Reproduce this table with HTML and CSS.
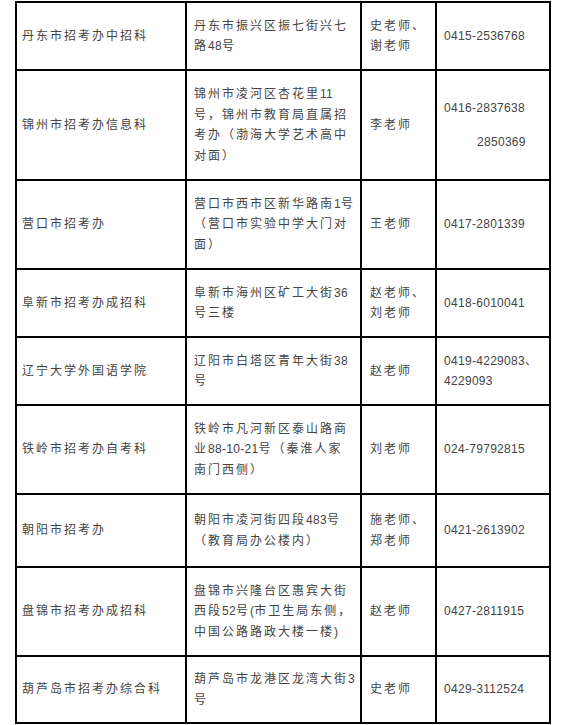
FILE: index.html
```html
<!DOCTYPE html>
<html lang="zh-CN">
<head>
<meta charset="utf-8">
<title>招考办联系方式</title>
<link rel="stylesheet" href="styles.css">
</head>
<body>
<div class="sheet">
  <div class="cell c1"><div class="t">丹东市招考办中招科</div></div>
  <div class="cell c2"><div class="t">丹东市振兴区振七街兴七<br>路<span class="n">48</span>号</div></div>
  <div class="cell c3"><div class="t">史老师、<br>谢老师</div></div>
  <div class="cell c4"><div class="t"><span class="n">0415-2536768</span></div></div>

  <div class="cell c1"><div class="t">锦州市招考办信息科</div></div>
  <div class="cell c2"><div class="t">锦州市凌河区杏花里<span class="n">11</span><br>号，锦州市教育局直属招<br>考办（渤海大学艺术高中<br>对面）</div></div>
  <div class="cell c3"><div class="t">李老师</div></div>
  <div class="cell c4"><div class="t"><div class="n">0416-2837638</div><div class="n second">2850369</div></div></div>

  <div class="cell c1"><div class="t">营口市招考办</div></div>
  <div class="cell c2"><div class="t">营口市西市区新华路南<span class="n">1</span>号<br>（营口市实验中学大门对<br>面）</div></div>
  <div class="cell c3"><div class="t">王老师</div></div>
  <div class="cell c4"><div class="t"><span class="n">0417-2801339</span></div></div>

  <div class="cell c1"><div class="t">阜新市招考办成招科</div></div>
  <div class="cell c2"><div class="t">阜新市海州区矿工大街<span class="n">36</span><br>号三楼</div></div>
  <div class="cell c3"><div class="t">赵老师、<br>刘老师</div></div>
  <div class="cell c4"><div class="t"><span class="n">0418-6010041</span></div></div>

  <div class="cell c1"><div class="t">辽宁大学外国语学院</div></div>
  <div class="cell c2"><div class="t">辽阳市白塔区青年大街<span class="n">38</span><br>号</div></div>
  <div class="cell c3"><div class="t">赵老师</div></div>
  <div class="cell c4"><div class="t"><span class="n">0419-4229083</span>、<br><span class="n">4229093</span></div></div>

  <div class="cell c1"><div class="t">铁岭市招考办自考科</div></div>
  <div class="cell c2"><div class="t">铁岭市凡河新区泰山路商<br>业<span class="n">88-10-21</span>号（秦淮人家<br>南门西侧）</div></div>
  <div class="cell c3"><div class="t">刘老师</div></div>
  <div class="cell c4"><div class="t"><span class="n">024-79792815</span></div></div>

  <div class="cell c1"><div class="t">朝阳市招考办</div></div>
  <div class="cell c2"><div class="t">朝阳市凌河街四段<span class="n">483</span>号<br>（教育局办公楼内）</div></div>
  <div class="cell c3"><div class="t">施老师、<br>郑老师</div></div>
  <div class="cell c4"><div class="t"><span class="n">0421-2613902</span></div></div>

  <div class="cell c1"><div class="t">盘锦市招考办成招科</div></div>
  <div class="cell c2"><div class="t">盘锦市兴隆台区惠宾大街<br>西段<span class="n">52</span>号<span class="n">(</span>市卫生局东侧，<br>中国公路路政大楼一楼<span class="n">)</span></div></div>
  <div class="cell c3"><div class="t">赵老师</div></div>
  <div class="cell c4"><div class="t"><span class="n">0427-2811915</span></div></div>

  <div class="cell c1"><div class="t">葫芦岛市招考办综合科</div></div>
  <div class="cell c2"><div class="t">葫芦岛市龙港区龙湾大街<span class="n">3</span><br>号</div></div>
  <div class="cell c3"><div class="t">史老师</div></div>
  <div class="cell c4"><div class="t"><span class="n">0429-3112524</span></div></div>
</div>
</body>
</html>
```

FILE: styles.css
```css
html, body {
  margin: 0;
  padding: 0;
  background: #ffffff;
}

body {
  font-family: "Liberation Sans", "Noto Sans CJK SC", sans-serif;
  font-size: 12px;
  color: #444444;
}

.sheet {
  display: grid;
  grid-template-columns: 170px 175px 75px 114px;
  grid-template-rows: 68px 110px 89px 68px 68px 89px 73px 89px 67px;
  width: max-content;
  margin: 1px 0 0 15px;
  border-left: 2px solid #000;
  border-top: 2px solid #000;
}

.cell {
  display: flex;
  align-items: center;
  border-right: 2px solid #000;
  border-bottom: 2px solid #000;
  line-height: 20.5px;
  letter-spacing: 2px;
  white-space: nowrap;
  overflow: hidden;
}

.c1 { padding-left: 5px; }
.c2 { padding-left: 7px; }
.c3 { padding-left: 8px; }
.c4 { padding-left: 7px; }

.n {
  letter-spacing: 0.3px;
}

.second {
  margin-top: 13px;
  padding-left: 33px;
}
```
